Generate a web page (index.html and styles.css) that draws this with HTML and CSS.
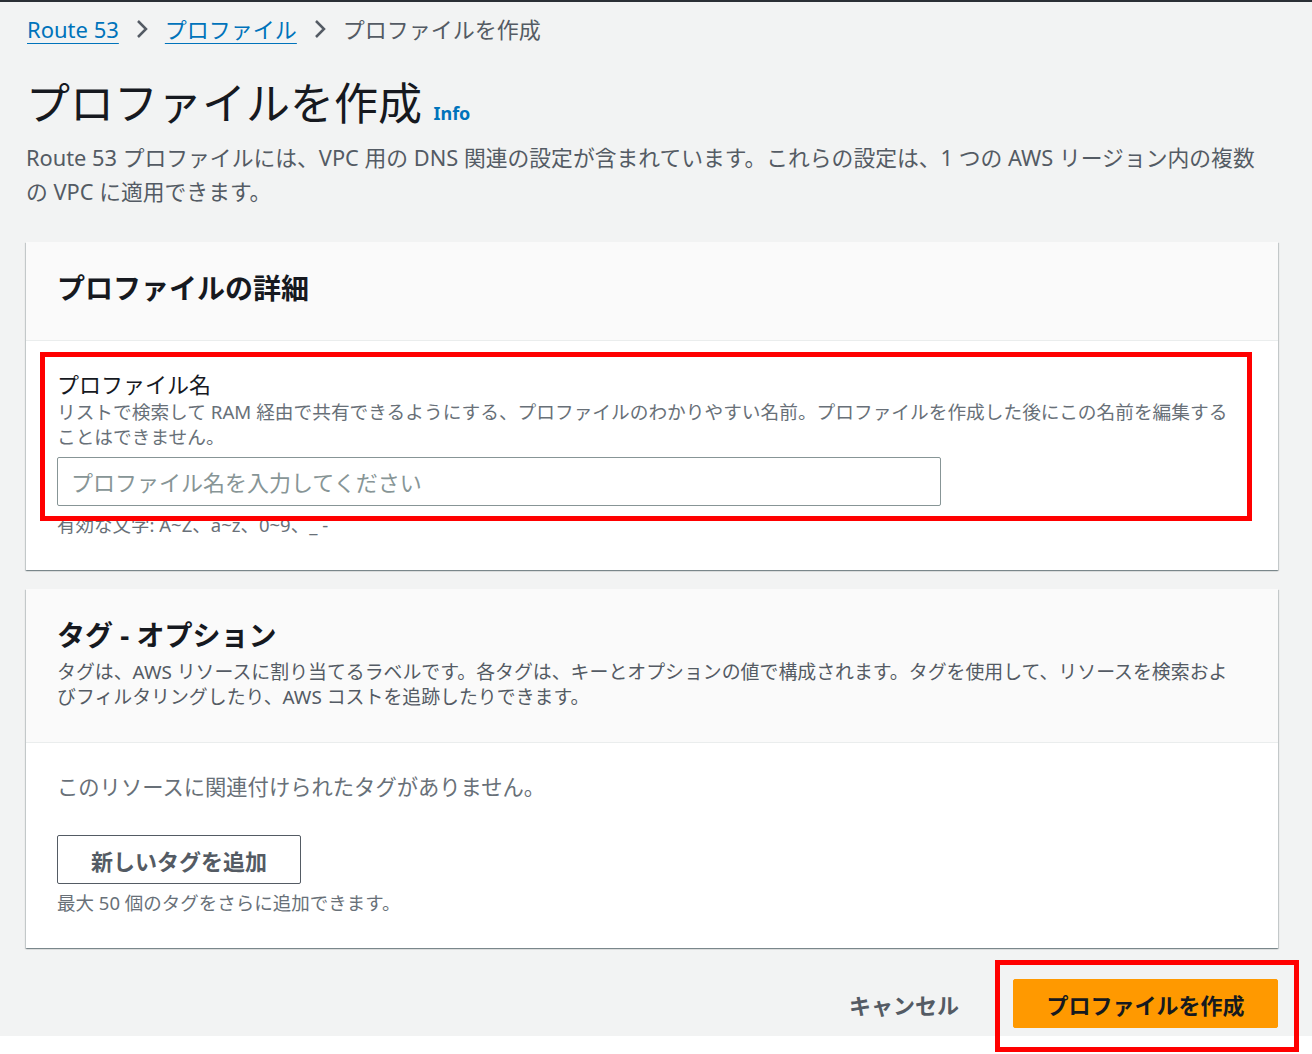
FILE: index.html
```html
<!DOCTYPE html>
<html lang="ja">
<head>
    <meta charset="UTF-8">
    <meta name="viewport" content="width=device-width, initial-scale=1.0">
    <title>プロファイルを作成</title>
    <link rel="stylesheet" href="styles.css">
</head>
<body>
    <div class="page">
        <nav class="breadcrumbs">
            <a href="#">Route 53</a>
            <svg class="chevron" viewBox="0 0 14 22" width="14" height="22"><path d="M3 3l8 8-8 8" fill="none" stroke="#545b64" stroke-width="2.5"/></svg>
            <a href="#">プロファイル</a>
            <svg class="chevron" viewBox="0 0 14 22" width="14" height="22"><path d="M3 3l8 8-8 8" fill="none" stroke="#545b64" stroke-width="2.5"/></svg>
            <span class="current">プロファイルを作成</span>
        </nav>

        <header class="page-header">
            <h1>プロファイルを作成 <a href="#" class="info">Info</a></h1>
            <p class="page-desc">Route 53 プロファイルには、VPC 用の DNS 関連の設定が含まれています。これらの設定は、1 つの AWS リージョン内の複数の VPC に適用できます。</p>
        </header>

        <section class="card">
            <div class="card-header">
                <h2>プロファイルの詳細</h2>
            </div>
            <div class="card-body">
                <label class="field-label" for="profile-name">プロファイル名</label>
                <p class="field-desc">リストで検索して RAM 経由で共有できるようにする、プロファイルのわかりやすい名前。プロファイルを作成した後にこの名前を編集することはできません。</p>
                <input type="text" id="profile-name" class="text-input" placeholder="プロファイル名を入力してください">
                <p class="field-hint">有効な文字: A~Z、a~z、0~9、_ -</p>
            </div>
        </section>

        <section class="card">
            <div class="card-header">
                <h2>タグ - オプション</h2>
                <p class="card-desc">タグは、AWS リソースに割り当てるラベルです。各タグは、キーとオプションの値で構成されます。タグを使用して、リソースを検索およびフィルタリングしたり、AWS コストを追跡したりできます。</p>
            </div>
            <div class="card-body">
                <p class="empty">このリソースに関連付けられたタグがありません。</p>
                <button class="btn-normal">新しいタグを追加</button>
                <p class="field-hint">最大 50 個のタグをさらに追加できます。</p>
            </div>
        </section>

        <div class="actions">
            <button class="btn-link">キャンセル</button>
            <button class="btn-primary">プロファイルを作成</button>
        </div>

        <div class="highlight highlight-name"></div>
        <div class="highlight highlight-submit"></div>
    </div>
</body>
</html>
```

FILE: styles.css
```css
body {
    margin: 0;
    padding-bottom: 18px;
    background: #fff;
    font-family: "Noto Sans", "Noto Sans CJK JP", sans-serif;
    color: #16191f;
}

.page {
    position: relative;
    background: #f2f3f3;
    border-top: 2px solid #2a2f35;
    padding: 12px 34px 8px 26px;
    height: 1036px;
    box-sizing: border-box;
}

.breadcrumbs {
    display: flex;
    align-items: center;
    gap: 16px;
    font-size: 22px;
    line-height: 30px;
    padding-left: 1px;
}

.breadcrumbs a {
    color: #0073bb;
    text-decoration: underline;
    text-underline-offset: 5px;
    text-decoration-thickness: 1px;
}

.breadcrumbs .chevron {
    width: 14px;
    height: 22px;
}

.breadcrumbs .current {
    color: #545b64;
}

.page-header h1 {
    margin: 31px 0 0;
    font-size: 44px;
    font-weight: 400;
    line-height: 56px;
}

.page-header .info {
    font-size: 18px;
    font-weight: 700;
    color: #0073bb;
    text-decoration: none;
}

.page-desc {
    max-width: 1240px;
    margin: 0;
    font-size: 21.8px;
    line-height: 34px;
    color: #545b64;
}

.card {
    background: #fff;
    margin-top: 33px;
    box-shadow: 0 1px 1px 0 rgba(0, 28, 36, 0.3), 1px 1px 1px 0 rgba(0, 28, 36, 0.15), -1px 1px 1px 0 rgba(0, 28, 36, 0.15);
}

.card + .card {
    margin-top: 19px;
}

.card-header {
    background: #fafafa;
    border-bottom: 1px solid #eaeded;
    padding: 25px 40px 31px 31px;
}

.card-header h2 {
    margin: 0;
    font-size: 28px;
    font-weight: 700;
    line-height: 42px;
}

.card-desc {
    max-width: 1172px;
    margin: 4px 0 0;
    padding-bottom: 1px;
    font-size: 18.9px;
    line-height: 25px;
    color: #545b64;
}

.card-body {
    padding: 28px 40px 33px 31px;
}

.field-label {
    display: block;
    font-size: 22px;
    line-height: 30px;
    color: #16191f;
}

.field-desc {
    margin: 0;
    font-size: 18.7px;
    line-height: 25px;
    color: #687078;
}

.text-input {
    display: block;
    box-sizing: border-box;
    width: 884px;
    height: 49px;
    margin-top: 8px;
    padding: 0 13px;
    border: 1px solid #879596;
    border-radius: 2px;
    font-family: inherit;
    font-size: 22px;
}

.text-input::placeholder {
    color: #879596;
}

.field-hint {
    margin: 6px 0 0;
    font-size: 18.5px;
    line-height: 25px;
    color: #687078;
}

.empty {
    margin: 0 0 32px;
    font-size: 21.3px;
    line-height: 32px;
    color: #687078;
}

.btn-normal {
    display: block;
    width: 244px;
    height: 49px;
    background: #fff;
    border: 1px solid #545b64;
    border-radius: 2px;
    font-family: inherit;
    font-size: 22px;
    font-weight: 700;
    color: #545b64;
}

.actions {
    display: flex;
    justify-content: flex-end;
    align-items: center;
    gap: 54px;
    margin-top: 31px;
}

.btn-link {
    background: none;
    border: none;
    padding: 0;
    font-family: inherit;
    font-size: 22px;
    font-weight: 700;
    color: #545b64;
}

.btn-primary {
    width: 265px;
    height: 49px;
    background: #ff9900;
    border: 1px solid #ff9900;
    border-radius: 2px;
    font-family: inherit;
    font-size: 22px;
    font-weight: 700;
    color: #16191f;
}

.highlight {
    position: absolute;
    border: 5px solid #ff0000;
    box-sizing: border-box;
}

.highlight-name {
    left: 40px;
    top: 350px;
    width: 1212px;
    height: 169px;
}

.highlight-submit {
    left: 995px;
    top: 958px;
    width: 304px;
    height: 92px;
}
```
